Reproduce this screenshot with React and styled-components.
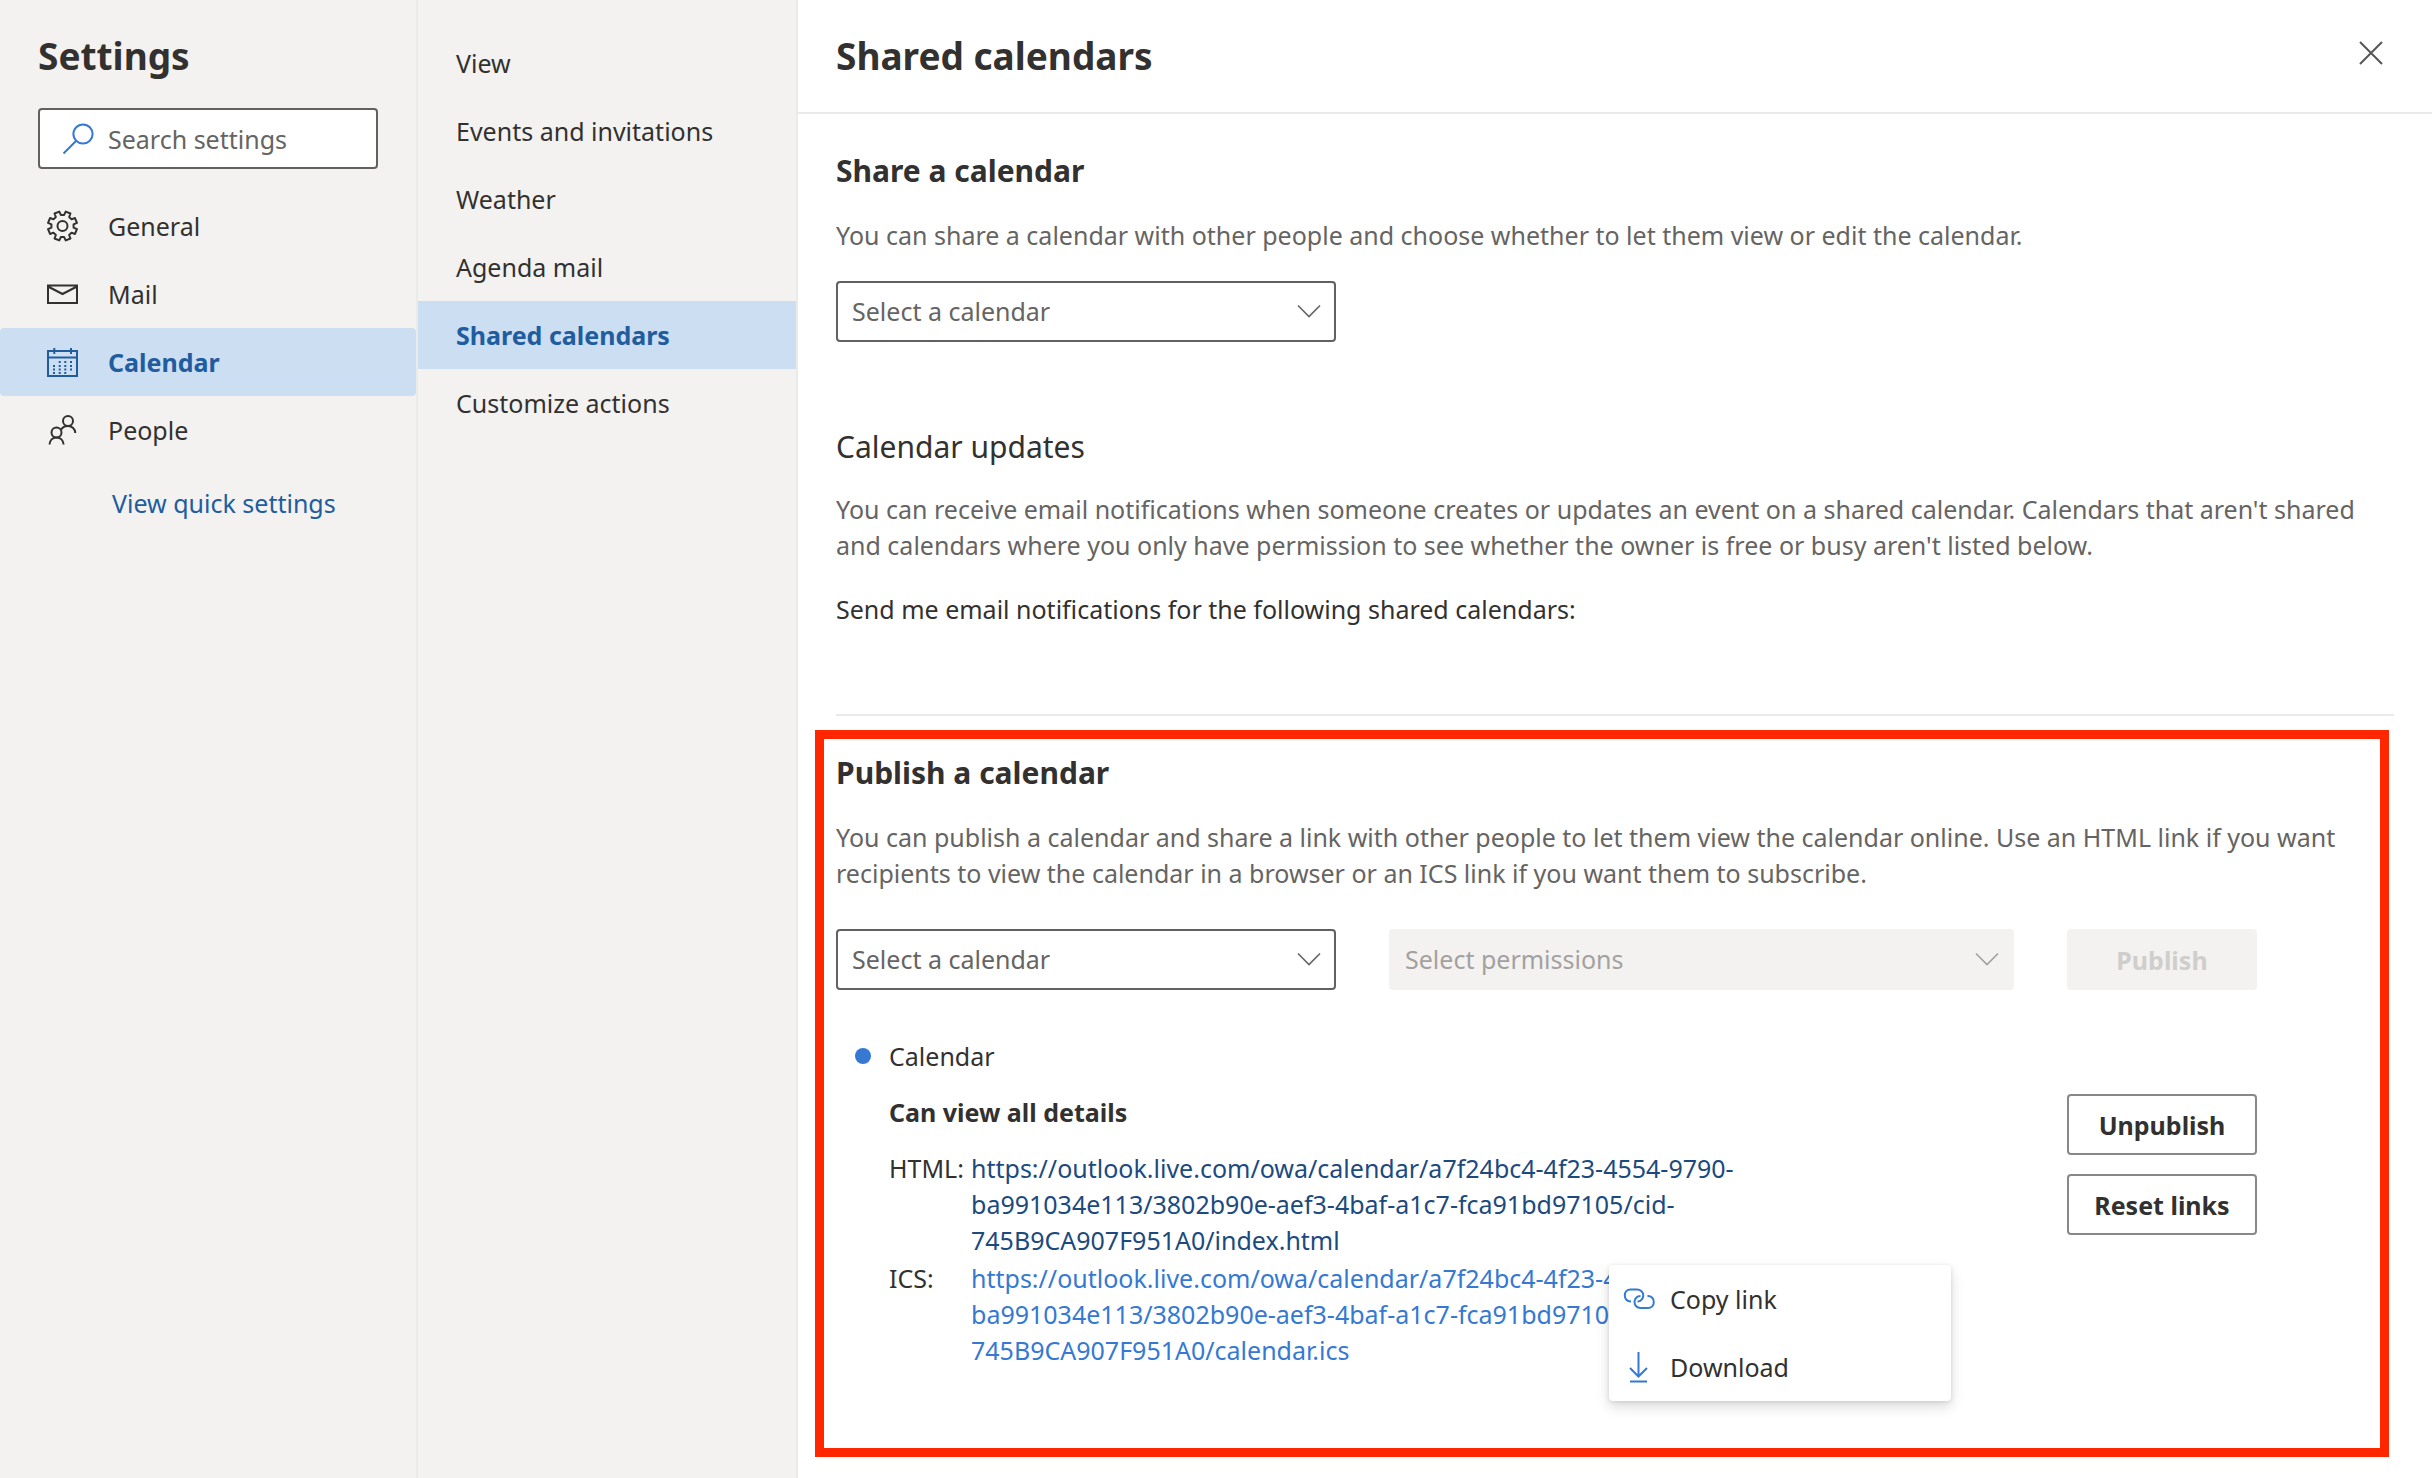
import React from 'react';
import styled, { createGlobalStyle, css } from 'styled-components';

const color = {
  text: '#323130',
  muted: '#666462',
  disabledText: '#a3a1a0',
  disabledStrong: '#d0cecc',
  panel: '#f3f2f0',
  line: '#eaeae9',
  border: '#636160',
  accent: '#3579d2',
  accentDark: '#215c9f',
  accentDeep: '#1c4a7e',
  selected: '#ccdef2',
  callout: '#ff2600',
};

const GlobalStyle = createGlobalStyle`
  * { box-sizing: border-box; }
  body { margin: 0; background: #fff; color: ${color.text}; }
  body, button, input, select { font: 400 25px/36px 'Noto Sans', 'Open Sans', sans-serif; }
  h1, h2, p, ul, dl, dd { margin: 0; padding: 0; }
  ul { list-style: none; }
  a { text-decoration: none; }
`;

const Shell = styled.div`
  display: grid;
  grid-template-columns: 418px 380px minmax(0, 1fr);
  min-height: 100vh;
`;

const SidePanel = styled.nav`
  background: ${color.panel};
  border-right: 2px solid ${color.line};
  padding-top: ${(p) => p.$top || 0}px;
`;

const PanelHead = styled.div`
  padding: 31px 38px 23px;
`;

const Title = styled.h1`
  font-size: 37px;
  line-height: 50px;
  font-weight: 700;
`;

const SearchBox = styled.label`
  display: flex;
  align-items: center;
  gap: 14px;
  height: 61px;
  margin-top: 27px;
  padding-left: 22px;
  background: #fff;
  border: 2px solid ${color.border};
  border-radius: 4px;
  color: ${color.accent};
`;

const SearchInput = styled.input`
  flex: 1;
  min-width: 0;
  padding: 0;
  border: 0;
  outline: 0;
  background: none;
  color: ${color.text};
  &::placeholder { color: ${color.muted}; opacity: 1; }
`;

const Icon = styled.svg`
  flex: none;
  width: 32px;
  height: 32px;
  fill: none;
  stroke: currentColor;
  stroke-width: 2;
`;

const NavItem = styled.a`
  display: flex;
  align-items: center;
  gap: 30px;
  height: 68px;
  padding-left: ${(p) => (p.$sub ? 38 : 46)}px;
  border-radius: ${(p) => (p.$sub ? 0 : 4)}px;
  color: ${color.text};
  ${(p) => p.$active && css`
    background: ${color.selected};
    color: ${color.accentDark};
    font-weight: 700;
  `}
`;

const QuickLink = styled.a`
  display: block;
  margin: 21px 0 0 112px;
  color: ${color.accentDark};
`;

const Header = styled.header`
  display: flex;
  align-items: center;
  justify-content: space-between;
  height: 114px;
  padding: 0 38px;
  border-bottom: 2px solid ${color.line};
`;

const CloseButton = styled.button`
  display: grid;
  place-items: center;
  width: 46px;
  height: 46px;
  margin-bottom: 6px;
  padding: 0;
  border: 0;
  background: none;
  color: #555;
`;

const Body = styled.div`
  padding: 37px 38px 0;
`;

const Heading = styled.h2`
  font-size: 30px;
  line-height: 40px;
  font-weight: ${(p) => (p.$light ? 400 : 700)};
`;

const Text = styled.p`
  margin-top: ${(p) => p.$gap}px;
  color: ${(p) => (p.$strong ? color.text : color.muted)};
`;

const Updates = styled.section`
  margin-top: 85px;
  padding-bottom: 87px;
  border-bottom: 2px solid ${color.line};
`;

const Field = styled.div`
  position: relative;
  width: ${(p) => p.$width}px;
  margin-top: ${(p) => p.$gap || 0}px;
  color: ${(p) => (p.$off ? color.disabledText : color.muted)};
`;

const Select = styled.select`
  display: block;
  width: 100%;
  height: 61px;
  padding: 0 60px 2px 14px;
  appearance: none;
  background: #fff;
  border: 2px solid ${color.border};
  border-radius: 4px;
  color: inherit;
  opacity: 1;
  &:disabled {
    background: ${color.panel};
    border-color: ${color.panel};
  }
`;

const Chevron = styled.svg`
  position: absolute;
  right: 15px;
  top: 23px;
  width: 24px;
  height: 14px;
  fill: none;
  stroke: currentColor;
  stroke-width: 1.6;
  pointer-events: none;
`;

const Publish = styled.section`
  margin: 14px 5px 0 -21px;
  padding: 14px 12px 80px;
  border: 9px solid ${color.callout};
`;

const PublishForm = styled.form`
  display: flex;
  gap: 53px;
  margin-top: 38px;
`;

const Button = styled.button`
  width: 190px;
  height: 61px;
  padding: 0;
  background: #fff;
  border: 2px solid #8a8886;
  border-radius: 4px;
  color: ${color.text};
  font-weight: 700;
  &:disabled {
    background: ${color.panel};
    border-color: ${color.panel};
    color: ${color.disabledStrong};
  }
`;

const Published = styled.div`
  max-width: 1421px;
  margin-top: 48px;
`;

const CalendarName = styled.div`
  display: flex;
  align-items: center;
  gap: 18px;
  padding-left: 19px;
  margin-bottom: 20px;
`;

const Dot = styled.span`
  width: 16px;
  height: 16px;
  border-radius: 50%;
  background: ${color.accent};
`;

const Details = styled.div`
  display: flex;
  justify-content: space-between;
  padding-left: 53px;
`;

const Permission = styled.p`
  font-weight: 700;
`;

const LinkArea = styled.div`
  position: relative;
  margin-top: 20px;
`;

const Links = styled.dl`
  display: grid;
  grid-template-columns: 82px 800px;
  row-gap: 2px;
`;

const Url = styled.a`
  color: ${(p) => (p.$dark ? color.accentDeep : color.accent)};
`;

const Actions = styled.div`
  display: flex;
  flex-direction: column;
  gap: 19px;
`;

const Menu = styled.div`
  position: absolute;
  left: 720px;
  top: 115px;
  width: 342px;
  background: #fff;
  border-radius: 4px;
  box-shadow: 0 6px 14px rgba(0, 0, 0, 0.14), 0 1px 4px rgba(0, 0, 0, 0.12);
`;

const MenuItem = styled.button`
  display: flex;
  align-items: center;
  gap: 15px;
  width: 100%;
  height: 68px;
  padding: 0 14px;
  border: 0;
  background: none;
  color: ${color.text};
  ${Icon} { color: ${color.accent}; }
`;

const gearPath = (() => {
  const parts = [];
  for (let i = 0; i < 8; i += 1) {
    const mid = (i + 0.5) * 45;
    [[-14, 11.2], [-10, 14.8], [10, 14.8], [14, 11.2]].forEach(([d, r]) => {
      const a = ((mid + d) * Math.PI) / 180;
      parts.push(`${(16.5 + r * Math.sin(a)).toFixed(2)} ${(16 - r * Math.cos(a)).toFixed(2)}`);
    });
  }
  return `M${parts.join('L')}Z`;
})();

const SearchIcon = () => (
  <Icon viewBox="0 0 32 32" aria-hidden="true">
    <circle cx="21" cy="11" r="9.6" />
    <path d="M14 18L1.5 30.5" />
  </Icon>
);

const GearIcon = () => (
  <Icon viewBox="0 0 32 32" aria-hidden="true">
    <path d={gearPath} strokeLinejoin="round" />
    <circle cx="16.5" cy="16" r="5" />
  </Icon>
);

const MailIcon = () => (
  <Icon viewBox="0 0 32 32" aria-hidden="true">
    <path d="M2 7.5H31V25H2ZM2 8.5L16.5 16L31 8.5" />
  </Icon>
);

const CalendarIcon = () => (
  <Icon viewBox="0 0 32 32" aria-hidden="true">
    <path d="M2 5H31V30H2ZM2 11.5H31M8.3 2V8M25 2V8" />
    <path
      d="M12.7 16H14.7M18.3 16H20.3M24 16H26M7 20H9M12.7 20H14.7M18.3 20H20.3M24 20H26M7 23.5H9M12.7 23.5H14.7M18.3 23.5H20.3M24 23.5H26M7 27H9M12.7 27H14.7M18.3 27H20.3"
    />
  </Icon>
);

const PeopleIcon = () => (
  <Icon viewBox="0 0 32 32" aria-hidden="true">
    <circle cx="22" cy="7" r="5" />
    <circle cx="10.5" cy="18.5" r="5" />
    <path d="M15.2 15.5C16.5 13.2 19 12 22 12C26 12 29.3 15 29.3 19M3.5 30.5C3.8 26.5 6.5 23.5 10.5 23.5C14.5 23.5 17.3 26.5 17.6 30.5" />
  </Icon>
);

const LinkIcon = () => (
  <Icon viewBox="0 0 32 32" aria-hidden="true">
    <path d="M8 18.5H7.5C4 18.5 1.8 15.8 1.8 12.5C1.8 9.2 4 6.5 7.5 6.5H14C17.5 6.5 20.3 9.2 20.3 12.5C20.3 15.5 18 18.5 14.5 18.5" />
    <path d="M17.5 13C14 13 11.5 15.8 11.5 19C11.5 22.3 14 25 17.5 25H25C28.5 25 30.8 22.3 30.8 19C30.8 15.8 28.5 13 25 13H24.5" />
  </Icon>
);

const DownloadIcon = () => (
  <Icon viewBox="0 0 32 32" aria-hidden="true">
    <path d="M15.5 1V25.5M7 17L15.5 25.5L24 17M7 30.5H24" />
  </Icon>
);

const categories = [
  { label: 'General', Glyph: GearIcon },
  { label: 'Mail', Glyph: MailIcon },
  { label: 'Calendar', Glyph: CalendarIcon, active: true },
  { label: 'People', Glyph: PeopleIcon },
];

const pages = [
  'View',
  'Events and invitations',
  'Weather',
  'Agenda mail',
  'Shared calendars',
  'Customize actions',
];

const base =
  'https://outlook.live.com/owa/calendar/a7f24bc4-4f23-4554-9790-ba991034e113/3802b90e-aef3-4baf-a1c7-fca91bd97105/cid-745B9CA907F951A0/';

function Dropdown({ label, placeholder, width, gap, disabled }) {
  return (
    <Field $width={width} $gap={gap} $off={disabled}>
      <Select aria-label={label} disabled={disabled}>
        <option>{placeholder}</option>
      </Select>
      <Chevron viewBox="0 0 24 14" aria-hidden="true">
        <path d="M1 1.5L12 12.5L23 1.5" />
      </Chevron>
    </Field>
  );
}

export default function App() {
  return (
    <Shell>
      <GlobalStyle />
      <SidePanel aria-label="Settings">
        <PanelHead>
          <Title as="div">Settings</Title>
          <SearchBox>
            <SearchIcon />
            <SearchInput type="text" placeholder="Search settings" aria-label="Search settings" />
          </SearchBox>
        </PanelHead>
        <ul>
          {categories.map(({ label, Glyph, active }) => (
            <li key={label}>
              <NavItem href="#" $active={active}>
                <Glyph />
                {label}
              </NavItem>
            </li>
          ))}
        </ul>
        <QuickLink href="#">View quick settings</QuickLink>
      </SidePanel>

      <SidePanel aria-label="Calendar settings" $top={29}>
        <ul>
          {pages.map((label) => (
            <li key={label}>
              <NavItem href="#" $sub $active={label === 'Shared calendars'}>
                {label}
              </NavItem>
            </li>
          ))}
        </ul>
      </SidePanel>

      <main>
        <Header>
          <Title>Shared calendars</Title>
          <CloseButton type="button" aria-label="Close">
            <Icon viewBox="0 0 32 32" aria-hidden="true">
              <path d="M5 5L27 27M27 5L5 27" />
            </Icon>
          </CloseButton>
        </Header>
        <Body>
          <section>
            <Heading>Share a calendar</Heading>
            <Text $gap={26}>
              You can share a calendar with other people and choose whether to let them view or edit the calendar.
            </Text>
            <Dropdown label="Calendar to share" placeholder="Select a calendar" width={500} gap={28} />
          </section>

          <Updates>
            <Heading $light>Calendar updates</Heading>
            <Text $gap={24}>
              You can receive email notifications when someone creates or updates an event on a shared calendar.
              Calendars that aren't shared and calendars where you only have permission to see whether the owner is
              free or busy aren't listed below.
            </Text>
            <Text $gap={28} $strong>
              Send me email notifications for the following shared calendars:
            </Text>
          </Updates>

          <Publish>
            <Heading>Publish a calendar</Heading>
            <Text $gap={26}>
              You can publish a calendar and share a link with other people to let them view the calendar online. Use
              an HTML link if you want recipients to view the calendar in a browser or an ICS link if you want them to
              subscribe.
            </Text>
            <PublishForm>
              <Dropdown label="Calendar to publish" placeholder="Select a calendar" width={500} />
              <Dropdown label="Permissions" placeholder="Select permissions" width={625} disabled />
              <Button type="submit" disabled>Publish</Button>
            </PublishForm>

            <Published>
              <CalendarName>
                <Dot />
                Calendar
              </CalendarName>
              <Details>
                <div>
                  <Permission>Can view all details</Permission>
                  <LinkArea>
                    <Links>
                      <dt>HTML:</dt>
                      <dd><Url href="#" $dark>{base}index.html</Url></dd>
                      <dt>ICS:</dt>
                      <dd><Url href="#">{base}calendar.ics</Url></dd>
                    </Links>
                    <Menu>
                      <MenuItem type="button"><LinkIcon />Copy link</MenuItem>
                      <MenuItem type="button"><DownloadIcon />Download</MenuItem>
                    </Menu>
                  </LinkArea>
                </div>
                <Actions>
                  <Button type="button">Unpublish</Button>
                  <Button type="button">Reset links</Button>
                </Actions>
              </Details>
            </Published>
          </Publish>
        </Body>
      </main>
    </Shell>
  );
}
